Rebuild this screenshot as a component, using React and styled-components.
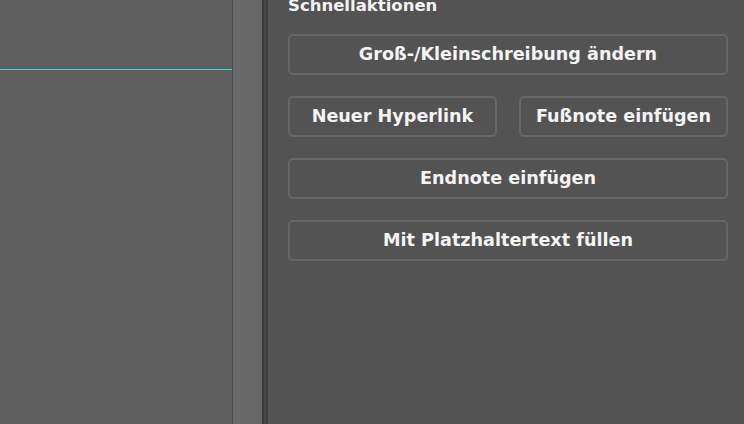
import React from "react";
import styled, { createGlobalStyle } from "styled-components";

const Global = createGlobalStyle`
  html, body { margin: 0; padding: 0; background: #535353; overflow: hidden; }
  #root { width: 744px; height: 424px; }
`;

const Shell = styled.div`
  display: flex;
  width: 744px;
  height: 424px;
  font-family: "DejaVu Sans", "Liberation Sans", sans-serif;
`;

const Canvas = styled.div`
  width: 232px;
  flex: none;
  background: #5d5d5d;
  display: flex;
  flex-direction: column;
`;

const Guide = styled.div`
  margin-top: 69px;
  height: 1px;
  background: #3de0e0;
`;

const Stripe = styled.div`
  flex: none;
  width: ${(p) => p.$w}px;
  background: ${(p) => p.$c};
`;

const Panel = styled.div`
  flex: 1;
  background: #535353;
  padding: 0 16px 0 20px;
  display: flex;
  flex-direction: column;
`;

const Title = styled.div`
  margin-top: -4px;
  height: 19px;
  margin-bottom: 19px;
  color: #f2f2f2;
  font-size: 16.5px;
  font-weight: 700;
  line-height: 19px;
  white-space: nowrap;
`;

const Stack = styled.div`
  display: flex;
  flex-direction: column;
  gap: 21px;
`;

const Row = styled.div`
  display: grid;
  grid-template-columns: 1fr 1fr;
  gap: 22px;
`;

const Action = styled.button`
  height: 41px;
  box-sizing: border-box;
  border: 2px solid #676767;
  border-radius: 5px;
  background: transparent;
  color: #f4f4f4;
  font-family: inherit;
  font-size: 17.6px;
  font-weight: 700;
  padding: 0 4px 1px;
  white-space: nowrap;
  display: flex;
  align-items: center;
  justify-content: center;
`;

export default function App() {
  return (
    <>
      <Global />
      <Shell>
        <Canvas>
          <Guide />
        </Canvas>
        <Stripe $w={1} $c="#4b4b4b" />
        <Stripe $w={29} $c="#686868" />
        <Stripe $w={2} $c="#3a3a3a" />
        <Stripe $w={2} $c="#474747" />
        <Stripe $w={2} $c="#3e3e3e" />
        <Panel>
          <Title>Schnellaktionen</Title>
          <Stack>
            <Action>Groß-/Kleinschreibung ändern</Action>
            <Row>
              <Action>Neuer Hyperlink</Action>
              <Action>Fußnote einfügen</Action>
            </Row>
            <Action>Endnote einfügen</Action>
            <Action>Mit Platzhaltertext füllen</Action>
          </Stack>
        </Panel>
      </Shell>
    </>
  );
}
